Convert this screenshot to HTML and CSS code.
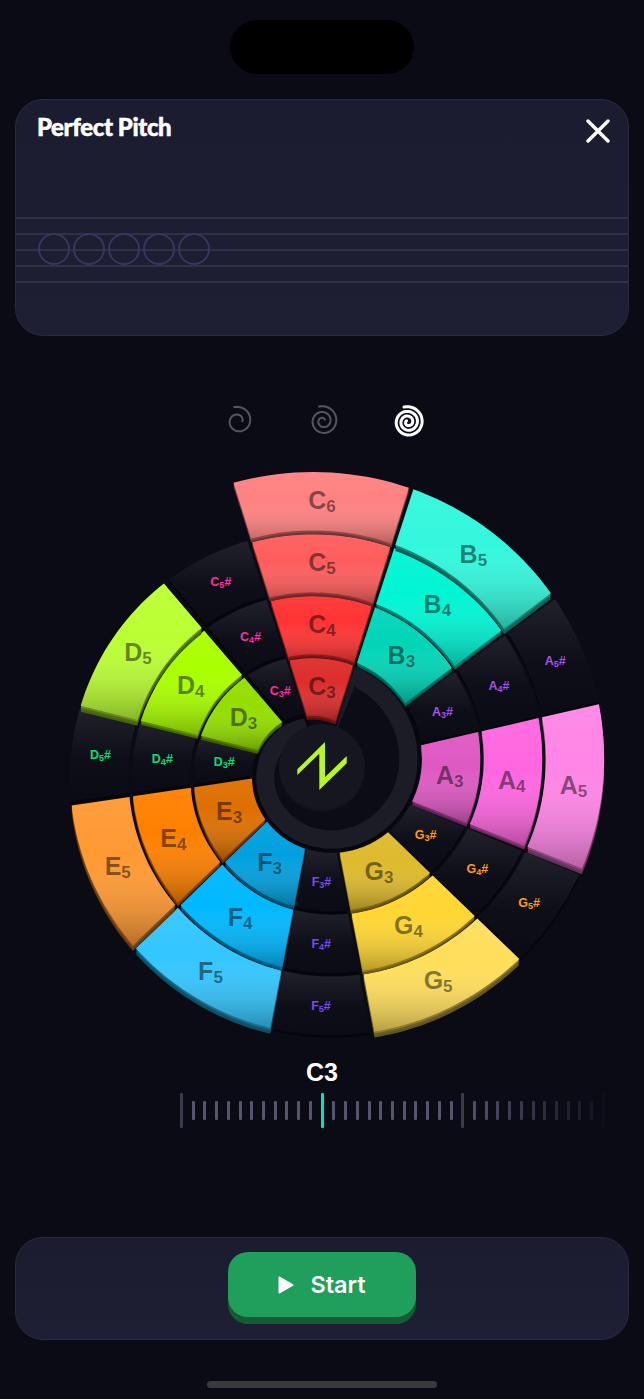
FILE: index.html
```html
<!DOCTYPE html>
<html lang="en">
<head>
    <meta charset="UTF-8">
    <meta name="viewport" content="width=device-width, initial-scale=1.0">
    <title>Perfect Pitch</title>
    <link rel="stylesheet" href="styles.css">
</head>
<body>
    <div class="notch"></div>

    <section class="card lesson">
        <header class="lesson-head">
            <h1>Perfect Pitch</h1>
            <svg class="close" viewBox="0 0 24 24" width="24" height="24">
                <path d="M2 2 L22 22 M22 2 L2 22"/>
            </svg>
        </header>
        <div class="staff">
            <div class="staff-line"></div>
            <div class="staff-line"></div>
            <div class="staff-line"></div>
            <div class="staff-line"></div>
            <div class="staff-line"></div>
            <div class="slots">
                <span class="slot"></span>
                <span class="slot"></span>
                <span class="slot"></span>
                <span class="slot"></span>
                <span class="slot"></span>
            </div>
        </div>
    </section>

    <div class="levels" id="levels"></div>

    <svg class="wheel" id="wheel" viewBox="0 460 644 590" width="644" height="590"></svg>

    <div class="note-name">C3</div>
    <div class="ruler" id="ruler"></div>

    <section class="card footer-card">
        <div class="start">
            <svg viewBox="0 0 16 18" width="16" height="18"><path d="M1.5 1.5 L14.5 9 L1.5 16.5 Z"/></svg>
            <span>Start</span>
        </div>
    </section>

    <div class="home-bar"></div>

    <script src="wheel.js"></script>
</body>
</html>
```

FILE: styles.css
```css
* {
    box-sizing: border-box;
}
body {
    margin: 0;
    width: 644px;
    height: 1399px;
    overflow: hidden;
    background-color: #0a0b14;
    font-family: "Liberation Sans", Arial, sans-serif;
    color: #ffffff;
    display: flex;
    flex-direction: column;
    align-items: center;
    padding-top: 20px;
}
.notch {
    width: 184px;
    height: 54px;
    border-radius: 27px;
    background-color: #000000;
}
.card {
    width: 614px;
    border: 1px solid #2a2a3f;
    border-radius: 28px;
    background: linear-gradient(#1b1c2f, #1e1f32);
}
.lesson {
    margin-top: 25px;
    height: 237px;
}
.lesson-head {
    height: 117px;
    padding: 14px 18px 0 21px;
    display: flex;
    justify-content: space-between;
    align-items: flex-start;
}
h1 {
    margin: 0;
    font-family: Lato, sans-serif;
    font-weight: 900;
    font-size: 24px;
    line-height: 26px;
    letter-spacing: -0.4px;
    -webkit-text-stroke: 0.5px #ffffff;
}
.close {
    margin-top: 5px;
}
.close path {
    fill: none;
    stroke: #ffffff;
    stroke-width: 3.4;
    stroke-linecap: round;
}
.staff {
    position: relative;
    display: flex;
    flex-direction: column;
    gap: 14px;
}
.staff-line {
    height: 2px;
    background-color: #303145;
}
.slots {
    position: absolute;
    left: 22px;
    top: 16px;
    display: flex;
    gap: 3px;
}
.slot {
    width: 32px;
    height: 32px;
    border: 2px solid #37365f;
    border-radius: 50%;
}
.levels {
    margin-top: 69px;
    width: 644px;
    height: 34px;
}
.levels svg {
    display: block;
}
.levels path {
    fill: none;
    stroke: #55565c;
    stroke-width: 2;
    stroke-linecap: round;
}
.levels path.active {
    stroke: #ffffff;
    stroke-width: 3;
}
.wheel {
    display: block;
    margin-top: 21px;
}
.cell-label {
    font-weight: 700;
    font-size: 25px;
    fill: #000000;
    fill-opacity: 0.47;
}
.cell-label .sub {
    font-size: 17px;
}
.sharp-label {
    font-weight: 700;
    font-size: 12.5px;
}
.sharp-label .sub {
    font-size: 9px;
}
.note-name {
    margin-top: 10px;
    font-weight: 700;
    font-size: 25px;
    line-height: 24px;
}
.ruler {
    align-self: flex-start;
    margin-top: 9px;
    margin-left: 180px;
    width: 425px;
    height: 35px;
    display: flex;
    justify-content: space-between;
    align-items: center;
}
.tick {
    width: 3px;
    height: 19px;
    border-radius: 1px;
    background-color: #55556f;
}
.tick.major {
    height: 35px;
    background-color: #3b3b4e;
}
.tick.current {
    height: 35px;
    background-color: #00e5c8;
}
.footer-card {
    margin-top: 109px;
    height: 103px;
    display: flex;
    justify-content: center;
    padding-top: 14px;
}
.start {
    width: 188px;
    height: 65px;
    border-radius: 20px;
    background-color: #209f5c;
    box-shadow: 0 7px 0 #155c34;
    display: flex;
    align-items: center;
    justify-content: center;
    gap: 16px;
    font-family: Inter, sans-serif;
    font-weight: 600;
    font-size: 23.5px;
}
.start svg path {
    fill: #ffffff;
    stroke: #ffffff;
    stroke-width: 2;
    stroke-linejoin: round;
}
.home-bar {
    margin-top: 41px;
    width: 230px;
    height: 7px;
    border-radius: 4px;
    background-color: #38383d;
}
```

FILE: wheel.js
```js
const SVG_NS = 'http://www.w3.org/2000/svg';
const CX = 322, CY = 767, ROW = 62;

// clockwise from the top, the wheel is a spiral: one turn loses one row
const notes = [
    { name: 'C', from: -17.5, to: 17.5, color: '#ff3333', rows: [6, 5, 4, 3] },
    { name: 'B', from: 18, to: 53, color: '#00f5d4', rows: [5, 4, 3] },
    { name: 'A', from: 54, to: 77, sharp: '#a84ff0', rows: [5, 4, 3] },
    { name: 'A', from: 77, to: 111.5, color: '#ff66e0', rows: [5, 4, 3] },
    { name: 'G', from: 112.5, to: 134, sharp: '#ff9f00', rows: [5, 4, 3] },
    { name: 'G', from: 134, to: 169, color: '#ffd633', rows: [5, 4, 3] },
    { name: 'F', from: 169.5, to: 191, sharp: '#7a4cf0', rows: [5, 4, 3] },
    { name: 'F', from: 191, to: 226, color: '#00b8ff', rows: [5, 4, 3] },
    { name: 'E', from: 226.5, to: 261.5, color: '#ff8000', rows: [5, 4, 3] },
    { name: 'D', from: 262, to: 284, sharp: '#00e07a', rows: [5, 4, 3] },
    { name: 'D', from: 284, to: 319.5, color: '#aaff00', rows: [5, 4, 3] },
    { name: 'C', from: 320.5, to: 342, sharp: '#ff2da0', rows: [5, 4, 3] }
];

function radius(t) {
    const bump = t > 0 ? 3 * Math.sin(Math.PI * t / 342.5) : 0;
    return 296.6 - t / 6 + bump;
}

function point(r, t) {
    const a = t * Math.PI / 180;
    return [CX + r * Math.sin(a), CY - r * Math.cos(a)];
}

function fmt(p) {
    return p[0].toFixed(1) + ' ' + p[1].toFixed(1);
}

function mix(hex, other, amount) {
    const out = [1, 3, 5].map(i => {
        const a = parseInt(hex.substr(i, 2), 16);
        const b = parseInt(other.substr(i, 2), 16);
        return Math.round(a + (b - a) * amount).toString(16).padStart(2, '0');
    });
    return '#' + out.join('');
}

function rowColor(base, octave) {
    if (octave === 3) return mix(base, '#000000', 0.13);
    if (octave === 5) return mix(base, '#ffffff', 0.2);
    if (octave === 6) return mix(base, '#ffffff', 0.38);
    return base;
}

// one cell of the wheel, k rows in from the outer edge
function cellPath(note, k) {
    const pad = 1.8;
    const top = [], bottom = [];
    for (let s = 0; s <= 20; s++) {
        const t = note.from + (note.to - note.from) * s / 20;
        const rOut = radius(t) - ROW * k - pad;
        const rIn = radius(t) - ROW * (k + 1) + pad;
        const dOut = (pad / rOut) * 180 / Math.PI * (s === 0 ? 0.6 : s === 20 ? -0.6 : 0);
        const dIn = (pad / rIn) * 180 / Math.PI * (s === 0 ? 0.6 : s === 20 ? -0.6 : 0);
        top.push(fmt(point(rOut, t + dOut)));
        bottom.unshift(fmt(point(rIn, t + dIn)));
    }
    return 'M' + top.concat(bottom).join(' L') + ' Z';
}

function hubPath(inset, from) {
    const pts = [fmt([CX, CY])];
    for (let t = from; t <= 342.5; t += 2) {
        pts.push(fmt(point(radius(t) - ROW * 3 - inset, t)));
    }
    return 'M' + pts.join(' L') + ' Z';
}

function add(parent, tag, attrs, text) {
    const el = document.createElementNS(SVG_NS, tag);
    for (const key in attrs) el.setAttribute(key, attrs[key]);
    if (text) el.textContent = text;
    parent.appendChild(el);
    return el;
}

function addLabel(parent, note, k, octave) {
    const mid = (note.from + note.to) / 2;
    const r = radius(mid) - ROW * (k + 0.5);
    const p = point(r, mid);
    const sharp = !!note.sharp;
    const text = add(parent, 'text', {
        x: p[0],
        y: p[1] + (sharp ? 4 : 8),
        'text-anchor': 'middle',
        class: sharp ? 'sharp-label' : 'cell-label'
    });
    if (sharp) text.setAttribute('fill', note.sharp);
    add(text, 'tspan', {}, note.name);
    add(text, 'tspan', { class: 'sub', dy: sharp ? 2 : 3 }, String(octave));
    if (sharp) add(text, 'tspan', { dy: -2 }, '#');
}

function drawWheel() {
    const svg = document.getElementById('wheel');
    const defs = add(svg, 'defs', {});

    const shade = add(defs, 'linearGradient', { id: 'shade', x1: 0, y1: 0, x2: 0, y2: 1 });
    add(shade, 'stop', { offset: 0, 'stop-color': '#ffffff', 'stop-opacity': 0.05 });
    add(shade, 'stop', { offset: 0.4, 'stop-color': '#ffffff', 'stop-opacity': 0 });
    add(shade, 'stop', { offset: 1, 'stop-color': '#000000', 'stop-opacity': 0.28 });

    const dark = add(defs, 'linearGradient', { id: 'dark', x1: 0, y1: 0, x2: 0, y2: 1 });
    add(dark, 'stop', { offset: 0, 'stop-color': '#20212b' });
    add(dark, 'stop', { offset: 0.55, 'stop-color': '#0d0e17' });
    add(dark, 'stop', { offset: 1, 'stop-color': '#0a0b14' });

    const cells = [];
    notes.forEach(note => {
        note.rows.forEach((octave, k) => {
            const mid = (note.from + note.to) / 2;
            const y = point(radius(mid) - ROW * (k + 0.5), mid)[1];
            cells.push({ note, k, octave, y });
        });
    });

    // sharps sit below the raised keys
    cells.filter(c => c.note.sharp).sort((a, b) => b.y - a.y).forEach(c => {
        const d = cellPath(c.note, c.k);
        add(svg, 'path', { d, fill: '#05060c', transform: 'translate(0 3)' });
        add(svg, 'path', { d, fill: 'url(#dark)' });
    });

    add(svg, 'path', { d: hubPath(1, 17.5), fill: '#1b1c26', stroke: '#07080f', 'stroke-width': 3 });
    add(svg, 'path', { d: hubPath(21, 22), fill: '#0b0c15' });

    // raised keys, lowest first so each lip falls over the key under it
    const raised = cells.filter(c => c.note.color).sort((a, b) => b.y - a.y);
    raised.forEach(c => {
        const d = cellPath(c.note, c.k);
        const color = rowColor(c.note.color, c.octave);
        if (c.k === 0 && c.note.name !== 'C') {
            add(svg, 'path', { d, fill: mix(color, '#000000', 0.62), transform: 'translate(0 6)' });
        }
        add(svg, 'path', { d, fill: mix(color, '#000000', 0.58), transform: 'translate(0 4)' });
        add(svg, 'path', { d, fill: mix(color, '#000000', 0.45), transform: 'translate(0 2)' });
        add(svg, 'path', { d, fill: color });
        add(svg, 'path', { d, fill: 'url(#shade)' });
    });

    cells.forEach(c => addLabel(svg, c.note, c.k, c.octave));

    add(svg, 'circle', { cx: CX, cy: 769, r: 43, fill: '#111219' });
    add(svg, 'circle', { cx: CX, cy: CY, r: 43, fill: '#15161f' });
    add(svg, 'polygon', {
        points: '297.3,769.3 325,742 325,777 346.7,756 346.7,763.3 319.3,790 319.3,753.7 297.3,775',
        fill: '#b8f52a'
    });
}

function drawLevels() {
    const box = document.getElementById('levels');
    const svg = add(box, 'svg', { width: 644, height: 34, viewBox: '0 404 644 34' });
    const levels = [
        { cx: 238, cy: 420, r: 14.5, turns: 1.3, shrink: 0.7 },
        { cx: 323, cy: 420, r: 15, turns: 2.2, shrink: 0.85 },
        { cx: 408, cy: 421, r: 15.5, turns: 2.9, shrink: 0.88, active: true }
    ];
    levels.forEach(l => {
        const pts = [];
        const steps = Math.round(l.turns * 40);
        for (let s = 0; s <= steps; s++) {
            const f = s / steps;
            const a = (-15 + f * l.turns * 360) * Math.PI / 180;
            const r = l.r * (1 - f * l.shrink);
            pts.push(fmt([l.cx + r * Math.sin(a), l.cy - r * Math.cos(a)]));
        }
        add(svg, 'path', { d: 'M' + pts.join(' L'), class: l.active ? 'active' : '' });
    });
}

function drawRuler() {
    const ruler = document.getElementById('ruler');
    for (let i = 0; i <= 36; i++) {
        const tick = document.createElement('div');
        tick.className = 'tick';
        if (i % 12 === 0) tick.classList.add('major');
        if (i === 12) tick.className = 'tick current';
        if (i > 24) tick.style.opacity = (1 - (i - 24) / 13).toFixed(2);
        ruler.appendChild(tick);
    }
}

drawWheel();
drawLevels();
drawRuler();
```
